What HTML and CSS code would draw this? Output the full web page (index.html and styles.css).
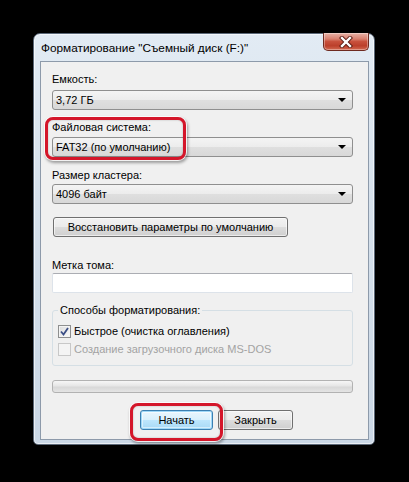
FILE: index.html
```html
<!DOCTYPE html>
<html lang="ru">
<head>
<meta charset="utf-8">
<title>Форматирование</title>
<link rel="stylesheet" href="styles.css">
</head>
<body>
<div class="window">
  <div class="titlebar">
    <span class="title">Форматирование "Съемный диск (F:)"</span>
    <div class="close">
      <svg width="14" height="12" viewBox="0 0 14 12">
        <path d="M3 2 L11 10 M11 2 L3 10" stroke="#5a1a12" stroke-width="4.2" stroke-linecap="square" fill="none"/>
        <path d="M3 2 L11 10 M11 2 L3 10" stroke="#ffffff" stroke-width="2.4" stroke-linecap="square" fill="none"/>
      </svg>
    </div>
  </div>
  <div class="client">
    <div class="label l-cap">Емкость:</div>
    <div class="combo c-cap"><span>3,72 ГБ</span><i class="arrow"></i></div>
    <div class="label l-fs">Файловая система:</div>
    <div class="combo c-fs"><span>FAT32 (по умолчанию)</span><i class="arrow"></i></div>
    <div class="label l-cl">Размер кластера:</div>
    <div class="combo c-cl"><span>4096 байт</span><i class="arrow"></i></div>
    <div class="btn reset">Восстановить параметры по умолчанию</div>
    <div class="label l-vol">Метка тома:</div>
    <div class="input"></div>
    <fieldset class="group">
      <legend>Способы форматирования:</legend>
      <div class="check-row">
        <span class="checkbox checked">
          <svg width="9" height="9" viewBox="0 0 9 9"><path d="M1 4.5 L3.5 7.5 L8 1" stroke="#3c4f86" stroke-width="1.8" fill="none"/></svg>
        </span>
        <span class="check-text">Быстрое (очистка оглавления)</span>
      </div>
      <div class="check-row disabled">
        <span class="checkbox"></span>
        <span class="check-text">Создание загрузочного диска MS-DOS</span>
      </div>
    </fieldset>
    <div class="progress"></div>
    <div class="buttons">
      <div class="btn default">Начать</div>
      <div class="btn close-btn">Закрыть</div>
    </div>
    <div class="hl hl-fs"></div>
    <div class="hl hl-start"></div>
  </div>
</div>
</body>
</html>
```

FILE: styles.css
```css
html, body {
  margin: 0;
  padding: 0;
  background: #000;
}
body {
  width: 409px;
  height: 482px;
  overflow: hidden;
  font-family: "Liberation Sans", Arial, sans-serif;
  font-size: 11px;
  color: #000;
}
.window {
  box-sizing: border-box;
  margin: 33px 0 0 33px;
  width: 342px;
  padding: 0 5px 4px 6px;
  border: 1px solid #5b6878;
  border-radius: 7px 7px 5px 5px;
  background: linear-gradient(#e2ebf4, #d6e1ec 40%, #cbd8e6);
  box-shadow: inset 0 0 0 1px rgba(255,255,255,0.6);
}
.titlebar {
  height: 27px;
  display: flex;
  justify-content: space-between;
  align-items: flex-start;
}
.title {
  line-height: 27px;
  font-size: 11.8px;
  color: #000;
  padding-left: 1px;
  margin-top: 1px;
  white-space: nowrap;
}
.close {
  margin-top: -1px;
  width: 46px;
  height: 18px;
  box-sizing: border-box;
  border: 1px solid #6e2a20;
  border-top: none;
  border-radius: 0 0 5px 5px;
  background: linear-gradient(#e8b3a8 0%, #d9806f 35%, #c8513d 50%, #bb3f2b 75%, #d36a52 100%);
  display: flex;
  align-items: center;
  justify-content: center;
  box-shadow: inset 0 0 0 1px rgba(255,255,255,0.35);
}
.client {
  position: relative;
  display: flex;
  flex-direction: column;
  align-items: flex-start;
  background: #f0f0f0;
  border: 1px solid #8d9aaa;
  padding: 9px 15px 9px 11px;
}
.label {
  height: 16px;
  line-height: 16px;
  white-space: nowrap;
}
.l-cap { margin-top: 0; }
.l-fs { margin-top: 9px; }
.l-cl { margin-top: 10px; }
.l-vol { margin-top: 20px; }
.combo {
  box-sizing: border-box;
  width: 301px;
  height: 20px;
  border: 1px solid #8f8f8f;
  border-radius: 3px;
  background: linear-gradient(#f4f4f4, #ececec 50%, #dfdfdf 50%, #d8d8d8);
  display: flex;
  align-items: center;
  justify-content: space-between;
  padding: 0 4px 0 3px;
  white-space: nowrap;
}
.c-cap { margin-top: 3px; }
.c-fs { margin-top: 2px; }
.c-cl { margin-top: 1px; }
.arrow {
  width: 0;
  height: 0;
  border-left: 4px solid transparent;
  border-right: 4px solid transparent;
  border-top: 4px solid #000;
  margin-right: 2px;
}
.btn {
  box-sizing: border-box;
  height: 20px;
  border: 1px solid #707070;
  border-radius: 3px;
  background: linear-gradient(#f2f2f2, #ebebeb 50%, #dddddd 50%, #cfcfcf);
  display: flex;
  align-items: center;
  justify-content: center;
  box-shadow: inset 0 0 0 1px rgba(255,255,255,0.6);
  white-space: nowrap;
}
.reset {
  margin-top: 13px;
  margin-left: 1px;
  width: 235px;
}
.input {
  box-sizing: border-box;
  width: 301px;
  height: 20px;
  background: #fff;
  border: 1px solid #dde3ea;
  border-top-color: #abadb3;
  border-radius: 2px;
}
.group {
  box-sizing: border-box;
  width: 301px;
  margin: 10px 0 0 0;
  padding: 4px 5px 7px 5px;
  border: 1px solid #d5dfe5;
  border-radius: 3px;
}
.group legend {
  padding: 0 2px;
  line-height: 15px;
  white-space: nowrap;
}
.check-row {
  display: flex;
  align-items: center;
  gap: 3px;
  height: 18px;
  white-space: nowrap;
}
.checkbox {
  box-sizing: border-box;
  width: 13px;
  height: 13px;
  border: 1px solid #8e8f8f;
  background: linear-gradient(135deg, #dcdcdc, #fbfbfb);
  display: flex;
  align-items: center;
  justify-content: center;
  box-shadow: inset 0 0 0 1px #f4f4f4;
}
.disabled .checkbox {
  border-color: #c8c8c8;
  background: #f4f4f4;
  box-shadow: none;
}
.disabled .check-text {
  color: #a3a3a3;
}
.progress {
  box-sizing: border-box;
  margin-top: 14px;
  width: 301px;
  height: 13px;
  border: 1px solid #b2b2b2;
  border-radius: 3px;
  background: linear-gradient(#f6f6f6, #e6e6e6 45%, #d8d8d8 55%, #e4e4e4);
}
.buttons {
  margin-top: 17px;
  margin-left: 88px;
  display: flex;
  gap: 5px;
}
.default {
  width: 73px;
  border-color: #3c7fb1;
  background: linear-gradient(#eaf6fd, #d9f0fc 50%, #bee6fd 50%, #a7d9f5);
  box-shadow: inset 0 0 0 1px #9fd8f8, inset 0 0 0 2px rgba(255,255,255,0.5);
}
.close-btn {
  width: 75px;
}
.hl {
  position: absolute;
  box-sizing: border-box;
  border: 3px solid #d4162a;
  border-radius: 8px;
  box-shadow: 0 0 0 1px rgba(255,255,255,0.85), 1px 2px 3px 1px rgba(0,0,0,0.35), inset 0 0 2px rgba(0,0,0,0.25);
}
.hl-fs {
  left: 4px;
  top: 55px;
  width: 141px;
  height: 43px;
}
.hl-start {
  left: 89px;
  top: 341px;
  width: 93px;
  height: 38px;
}
```
